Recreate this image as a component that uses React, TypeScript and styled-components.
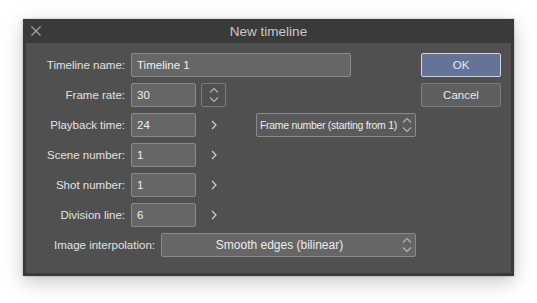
import styled, { createGlobalStyle } from 'styled-components'

const GlobalStyle = createGlobalStyle`
  html, body {
    margin: 0;
    padding: 0;
    background: #ffffff;
    font-family: "Liberation Sans", Arial, sans-serif;
  }
`

const Page = styled.div`
  width: 537px;
  height: 303px;
  padding: 19px 0 0 23px;
  box-sizing: border-box;
`

const Window = styled.div`
  width: 491px;
  height: 257px;
  background: #3a3a3a;
  box-sizing: border-box;
  padding: 0 3px 3px 3px;
  display: flex;
  flex-direction: column;
  box-shadow: 0 6px 18px rgba(0, 0, 0, 0.22), 0 0 2px rgba(0, 0, 0, 0.3);
`

const TitleBar = styled.div`
  position: relative;
  height: 24px;
  display: flex;
  align-items: center;
  justify-content: center;
  color: #c9c9c9;
  font-size: 13.5px;
`

const CloseButton = styled.svg`
  position: absolute;
  left: 5px;
  top: 7px;
`

const Body = styled.div`
  flex: 1;
  background: #505050;
  display: flex;
  padding: 10px 10px 0 0;
`

const Form = styled.div`
  flex: 1;
  display: flex;
  flex-direction: column;
  gap: 6px;
`

const Row = styled.div`
  display: flex;
  align-items: center;
  height: 24px;
`

const Label = styled.div<{ $width: number }>`
  width: ${(p) => p.$width}px;
  text-align: right;
  color: #e2e2e2;
  font-size: 11.5px;
  padding-right: 6px;
  box-sizing: content-box;
  white-space: nowrap;
`

const Input = styled.div<{ $width: number }>`
  width: ${(p) => p.$width}px;
  height: 24px;
  box-sizing: border-box;
  background: #666666;
  border: 1px solid #8a8a8a;
  border-radius: 2px;
  color: #f0f0f0;
  font-size: 11.5px;
  display: flex;
  align-items: center;
  padding-left: 5px;
`

const Side = styled.div`
  width: 25px;
  margin-left: 5px;
  height: 24px;
  display: flex;
  align-items: center;
  justify-content: center;
`

const StepperBox = styled.div`
  width: 25px;
  height: 24px;
  box-sizing: border-box;
  border: 1px solid #7c7c7c;
  border-radius: 2px;
  display: flex;
  align-items: center;
  justify-content: center;
`

const Select = styled.div<{ $width: number; $center?: boolean }>`
  width: ${(p) => p.$width}px;
  height: 24px;
  box-sizing: border-box;
  background: ${(p) => (p.$center ? '#666666' : '#5a5a5a')};
  border: 1px solid #8a8a8a;
  border-radius: 2px;
  color: #ececec;
  display: flex;
  align-items: center;
  padding: 0 2px 0 3px;
  font-size: ${(p) => (p.$center ? '12px' : '10.5px')};
  letter-spacing: ${(p) => (p.$center ? '0' : '-0.3px')};
`

const SelectText = styled.span<{ $center?: boolean }>`
  flex: 1;
  text-align: ${(p) => (p.$center ? 'center' : 'left')};
  padding-right: ${(p) => (p.$center ? '7px' : '0')};
  white-space: nowrap;
  overflow: hidden;
`

const ModeSelect = styled.div`
  margin-left: 30px;
`

const Buttons = styled.div`
  display: flex;
  flex-direction: column;
  gap: 6px;
`

const Button = styled.div<{ $primary?: boolean }>`
  width: 80px;
  height: 24px;
  box-sizing: border-box;
  border-radius: 2px;
  display: flex;
  align-items: center;
  justify-content: center;
  font-size: 11.5px;
  color: #e8e8e8;
  background: ${(p) => (p.$primary ? '#647499' : '#5f5f5f')};
  border: 1px solid ${(p) => (p.$primary ? '#d0d4de' : '#7c7c7c')};
`

const UpDown = () => (
  <svg width="12" height="18" viewBox="0 0 12 18" fill="none" stroke="#b4b4b4" strokeWidth="1.1">
    <path d="M2 6.5 L6 2.5 L10 6.5" />
    <path d="M2 11.5 L6 15.5 L10 11.5" />
  </svg>
)

const Chevron = () => (
  <svg width="8" height="12" viewBox="0 0 8 12" fill="none" stroke="#d0d0d0" strokeWidth="1.2">
    <path d="M2 2 L6 6 L2 10" />
  </svg>
)

const fields = [
  { label: 'Scene number:', value: '1' },
  { label: 'Shot number:', value: '1' },
  { label: 'Division line:', value: '6' },
]

export default function App() {
  return (
    <Page>
      <GlobalStyle />
      <Window>
        <TitleBar>
          <CloseButton width="10" height="10" viewBox="0 0 10 10" stroke="#a8a8a8" strokeWidth="1.1">
            <path d="M0.5 0.5 L9.5 9.5 M9.5 0.5 L0.5 9.5" />
          </CloseButton>
          New timeline
        </TitleBar>
        <Body>
          <Form>
            <Row>
              <Label $width={99}>Timeline name:</Label>
              <Input $width={220}>Timeline 1</Input>
            </Row>
            <Row>
              <Label $width={99}>Frame rate:</Label>
              <Input $width={65}>30</Input>
              <Side>
                <StepperBox>
                  <UpDown />
                </StepperBox>
              </Side>
            </Row>
            <Row>
              <Label $width={99}>Playback time:</Label>
              <Input $width={65}>24</Input>
              <Side>
                <Chevron />
              </Side>
              <ModeSelect>
                <Select $width={160}>
                  <SelectText>Frame number (starting from 1)</SelectText>
                  <UpDown />
                </Select>
              </ModeSelect>
            </Row>
            {fields.map((f) => (
              <Row key={f.label}>
                <Label $width={99}>{f.label}</Label>
                <Input $width={65}>{f.value}</Input>
                <Side>
                  <Chevron />
                </Side>
              </Row>
            ))}
            <Row>
              <Label $width={129}>Image interpolation:</Label>
              <Select $width={255} $center>
                <SelectText $center>Smooth edges (bilinear)</SelectText>
                <UpDown />
              </Select>
            </Row>
          </Form>
          <Buttons>
            <Button $primary>OK</Button>
            <Button>Cancel</Button>
          </Buttons>
        </Body>
      </Window>
    </Page>
  )
}
